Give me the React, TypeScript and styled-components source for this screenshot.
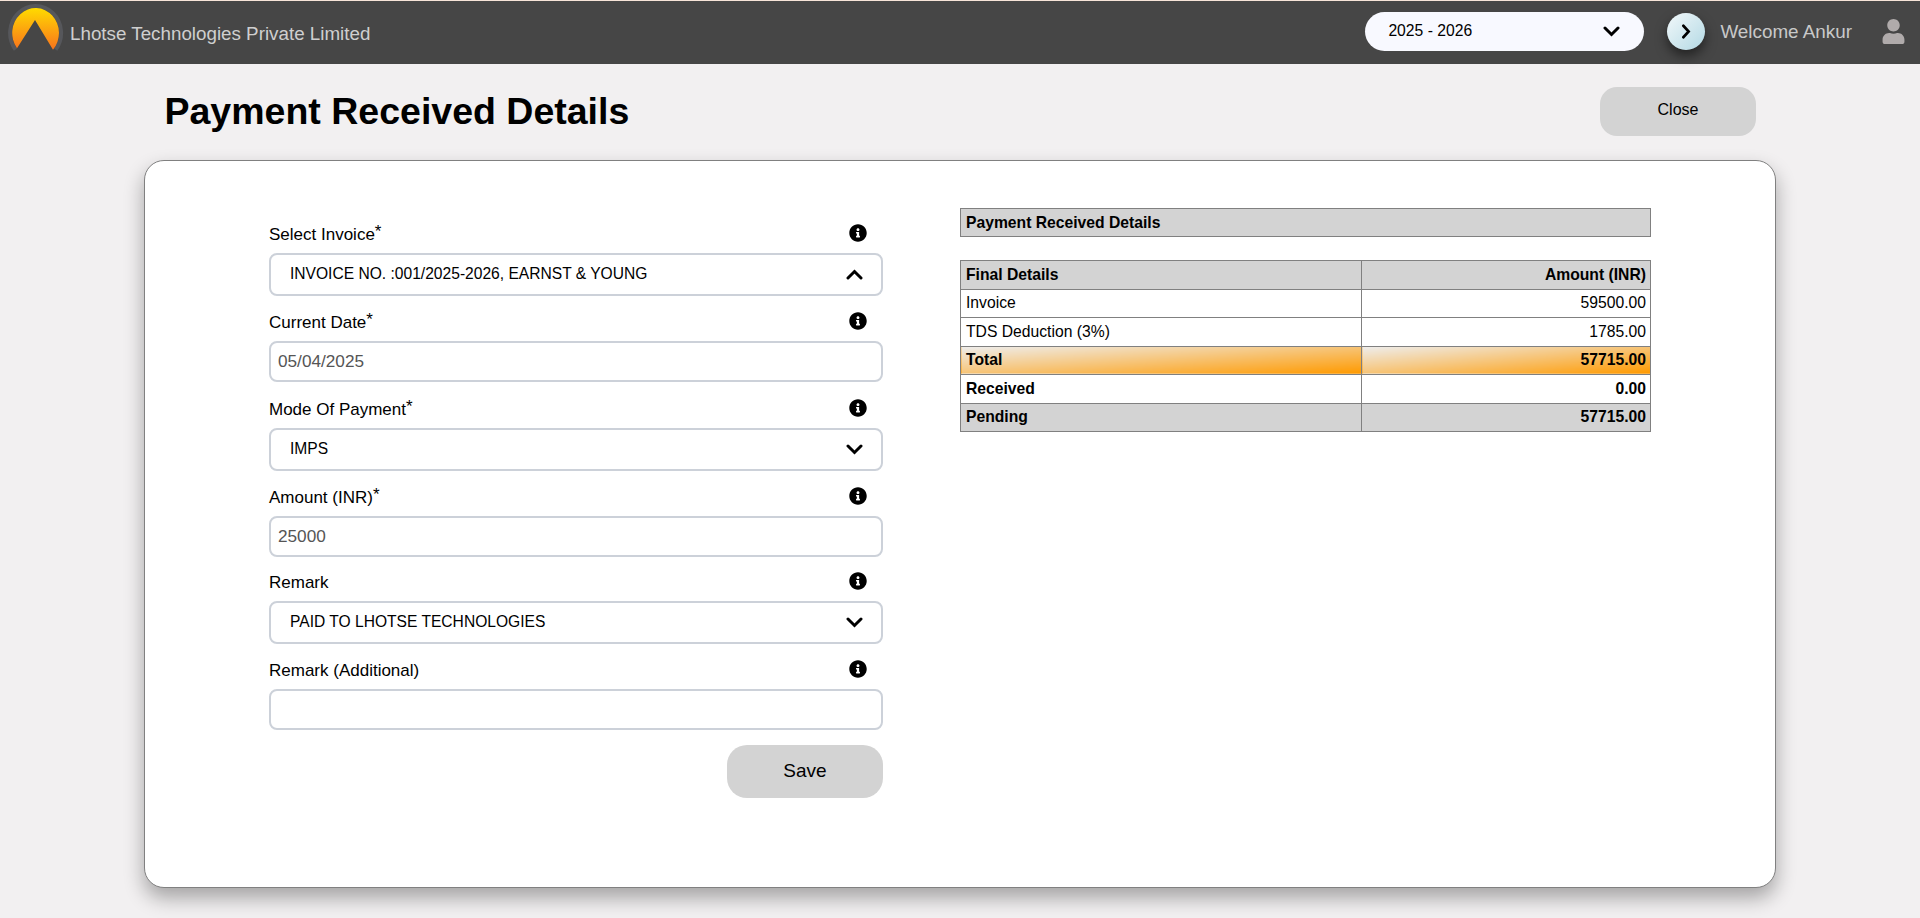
import React from "react";
import styled, { createGlobalStyle } from "styled-components";
import { FaInfoCircle, FaUser } from "react-icons/fa";

const Global = createGlobalStyle`
  html, body { margin: 0; padding: 0; background: #f2f0f1; }
  * { box-sizing: border-box; }
  body { font-family: "Liberation Sans", Arial, sans-serif; color: #000; }
`;

const Page = styled.div`
  min-height: 918px;
  display: flex;
  flex-direction: column;
`;

const Header = styled.header`
  height: 64px;
  border-top: 1px solid #f7e4d8;
  background: #464646;
  display: flex;
  align-items: center;
  padding: 0 15px 0 8px;
`;

const Brand = styled.div`
  font-size: 18.8px;
  color: #cfcfcf;
  margin: 2px 0 0 6px;
  flex: 1;
`;

const YearSelect = styled.div`
  width: 279px;
  height: 39px;
  margin-top: -3px;
  border-radius: 20px;
  background: #f8f9ff;
  display: flex;
  align-items: center;
  justify-content: space-between;
  padding: 0 24px 0 23px;
  font-size: 15.7px;
`;

const RoundButton = styled.button`
  width: 38px;
  height: 37px;
  margin: -2px 15px 0 23px;
  padding: 0;
  border: 0;
  border-radius: 50%;
  background: linear-gradient(135deg, #f2f8fa, #b3d9e4);
  box-shadow: 0 6px 12px rgba(0, 0, 0, 0.5);
  display: flex;
  align-items: center;
  justify-content: center;
`;

const Welcome = styled.div`
  font-size: 18.85px;
  color: #c9c9c9;
  margin-right: 30px;
  margin-top: -2px;
`;

const UserIcon = styled(FaUser)`
  width: 23px;
  height: 25px;
  color: #b0abab;
  margin-top: -2px;
`;

const TitleRow = styled.div`
  height: 96px;
  display: flex;
  align-items: center;
  justify-content: space-between;
  padding: 0 164px 2px 164.5px;
`;

const Title = styled.h1`
  margin: 0;
  font-size: 37.5px;
  font-weight: 700;
`;

const GreyButton = styled.button<{ $w: number; $h: number; $size: number; $r: number }>`
  width: ${(p) => p.$w}px;
  height: ${(p) => p.$h}px;
  border: 0;
  padding: 0 0 2px;
  border-radius: ${(p) => p.$r}px;
  background: #d3d3d3;
  font-family: inherit;
  font-size: ${(p) => p.$size}px;
  color: #000;
`;

const Card = styled.main`
  margin: 0 144px;
  height: 728px;
  background: #fff;
  border: 1px solid #808080;
  border-radius: 20px;
  box-shadow: 0 10px 20px rgba(0, 0, 0, 0.32);
  display: grid;
  grid-template-columns: 614px 691px;
  column-gap: 77px;
  padding: 47px 124px 0;
`;

const Form = styled.form`
  padding-top: 14px;
  display: flex;
  flex-direction: column;
`;

const Field = styled.div<{ $after: number }>`
  margin-bottom: ${(p) => p.$after}px;
`;

const LabelRow = styled.div`
  height: 24px;
  margin-bottom: 7px;
  display: flex;
  align-items: center;
  justify-content: space-between;
  padding-right: 16px;
  font-size: 17px;
`;

const LabelText = styled.span`
  margin-top: 2px;
`;

const Req = styled.sup`
  font-size: 17px;
  line-height: 0;
  vertical-align: 3px;
`;

const Info = styled(FaInfoCircle)`
  width: 18px;
  height: 18px;
  margin-top: -3px;
`;

const SelectBox = styled.div`
  height: 43px;
  border: 2px solid #ccd1d9;
  border-radius: 8px;
  display: flex;
  align-items: center;
  justify-content: space-between;
  padding: 0 18px 1px 19px;
  font-size: 15.6px;
`;

const TextBox = styled.input`
  display: block;
  width: 100%;
  height: 41px;
  border: 2px solid #ccd1d9;
  border-radius: 8px;
  padding: 0 7px;
  background: #fff;
  font-family: inherit;
  font-size: 17.2px;
  color: #555;
  outline: none;
`;

const SaveRow = styled.div`
  display: flex;
  justify-content: flex-end;
`;

const Side = styled.section`
  display: flex;
  flex-direction: column;
`;

const Table = styled.table<{ $mb?: number }>`
  width: 100%;
  border-collapse: collapse;
  table-layout: fixed;
  font-size: 15.7px;
  margin-bottom: ${(p) => p.$mb ?? 0}px;
`;

const Cell = styled.td<{ $right?: boolean; $bold?: boolean; $tone?: "grey" | "total" | "plain"; $h?: number }>`
  height: ${(p) => p.$h ?? 28.5}px;
  padding: 0 4px 0 5px;
  border: 1px solid #808080;
  text-align: ${(p) => (p.$right ? "right" : "left")};
  font-weight: ${(p) => (p.$bold ? 700 : 400)};
  background: ${(p) =>
    p.$tone === "grey"
      ? "#d3d3d3"
      : p.$tone === "total"
        ? "linear-gradient(to bottom right, #eeeeee, #ff9a00)"
        : "#fff"};
`;

const Chevron = ({ dir, w = 17, h = 11, sw = 3 }: { dir: "up" | "down" | "right"; w?: number; h?: number; sw?: number }) => {
  const d =
    dir === "down" ? "M2 2 L8.5 8.5 L15 2" : dir === "up" ? "M2 9 L8.5 2.5 L15 9" : "M2.5 2 L8.5 8.5 L2.5 15";
  const box = dir === "right" ? "0 0 11 17" : "0 0 17 11";
  return (
    <svg width={w} height={h} viewBox={box} fill="none" aria-hidden="true">
      <path d={d} stroke="#000" strokeWidth={sw} strokeLinecap="round" strokeLinejoin="miter" />
    </svg>
  );
};

const Logo = () => (
  <svg width="56" height="63" viewBox="8 1 56 63" aria-hidden="true">
    <defs>
      <linearGradient id="sun" x1="0" y1="0" x2="0" y2="1">
        <stop offset="0" stopColor="#ffdb00" />
        <stop offset="1" stopColor="#f9731c" />
      </linearGradient>
    </defs>
    <path d="M15.5 49.6 A25.5 27 0 1 1 55.7 49.6" fill="none" stroke="#56575b" strokeWidth="4" />
    <path d="M17 48.2 A23.4 25 0 1 1 53 49.7 L35 20 Z" fill="url(#sun)" />
  </svg>
);

const Label = ({ text, req }: { text: string; req?: boolean }) => (
  <LabelRow>
    <LabelText>
      {text}
      {req && <Req>*</Req>}
    </LabelText>
    <Info />
  </LabelRow>
);

const rows: { name: string; amount: string; bold?: boolean; tone: "grey" | "total" | "plain" }[] = [
  { name: "Final Details", amount: "Amount (INR)", bold: true, tone: "grey" },
  { name: "Invoice", amount: "59500.00", tone: "plain" },
  { name: "TDS Deduction (3%)", amount: "1785.00", tone: "plain" },
  { name: "Total", amount: "57715.00", bold: true, tone: "total" },
  { name: "Received", amount: "0.00", bold: true, tone: "plain" },
  { name: "Pending", amount: "57715.00", bold: true, tone: "grey" },
];

export default function App() {
  return (
    <Page>
      <Global />
      <Header>
        <Logo />
        <Brand>Lhotse Technologies Private Limited</Brand>
        <YearSelect>
          <span>2025 - 2026</span>
          <Chevron dir="down" />
        </YearSelect>
        <RoundButton aria-label="next">
          <Chevron dir="right" w={10} h={15} />
        </RoundButton>
        <Welcome>Welcome Ankur</Welcome>
        <UserIcon />
      </Header>
      <TitleRow>
        <Title>Payment Received Details</Title>
        <GreyButton $w={156} $h={49} $size={16} $r={17}>Close</GreyButton>
      </TitleRow>
      <Card>
        <Form>
          <Field $after={14}>
            <Label text="Select Invoice" req />
            <SelectBox>
              <span>INVOICE NO. :001/2025-2026, EARNST &amp; YOUNG</span>
              <Chevron dir="up" />
            </SelectBox>
          </Field>
          <Field $after={15}>
            <Label text="Current Date" req />
            <TextBox readOnly defaultValue="05/04/2025" />
          </Field>
          <Field $after={14}>
            <Label text="Mode Of Payment" req />
            <SelectBox>
              <span>IMPS</span>
              <Chevron dir="down" />
            </SelectBox>
          </Field>
          <Field $after={13}>
            <Label text="Amount (INR)" req />
            <TextBox readOnly defaultValue="25000" />
          </Field>
          <Field $after={14}>
            <Label text="Remark" />
            <SelectBox>
              <span>PAID TO LHOTSE TECHNOLOGIES</span>
              <Chevron dir="down" />
            </SelectBox>
          </Field>
          <Field $after={15}>
            <Label text="Remark (Additional)" />
            <TextBox readOnly defaultValue="" />
          </Field>
          <SaveRow>
            <GreyButton $w={156} $h={53} $size={19} $r={20}>Save</GreyButton>
          </SaveRow>
        </Form>
        <Side>
          <Table $mb={23}>
            <tbody>
              <tr>
                <Cell $bold $tone="grey" $h={28}>Payment Received Details</Cell>
              </tr>
            </tbody>
          </Table>
          <Table>
            <colgroup>
              <col style={{ width: "58.15%" }} />
              <col />
            </colgroup>
            <tbody>
              {rows.map((r) => (
                <tr key={r.name}>
                  <Cell $bold={r.bold} $tone={r.tone}>{r.name}</Cell>
                  <Cell $right $bold={r.bold} $tone={r.tone}>{r.amount}</Cell>
                </tr>
              ))}
            </tbody>
          </Table>
        </Side>
      </Card>
    </Page>
  );
}
